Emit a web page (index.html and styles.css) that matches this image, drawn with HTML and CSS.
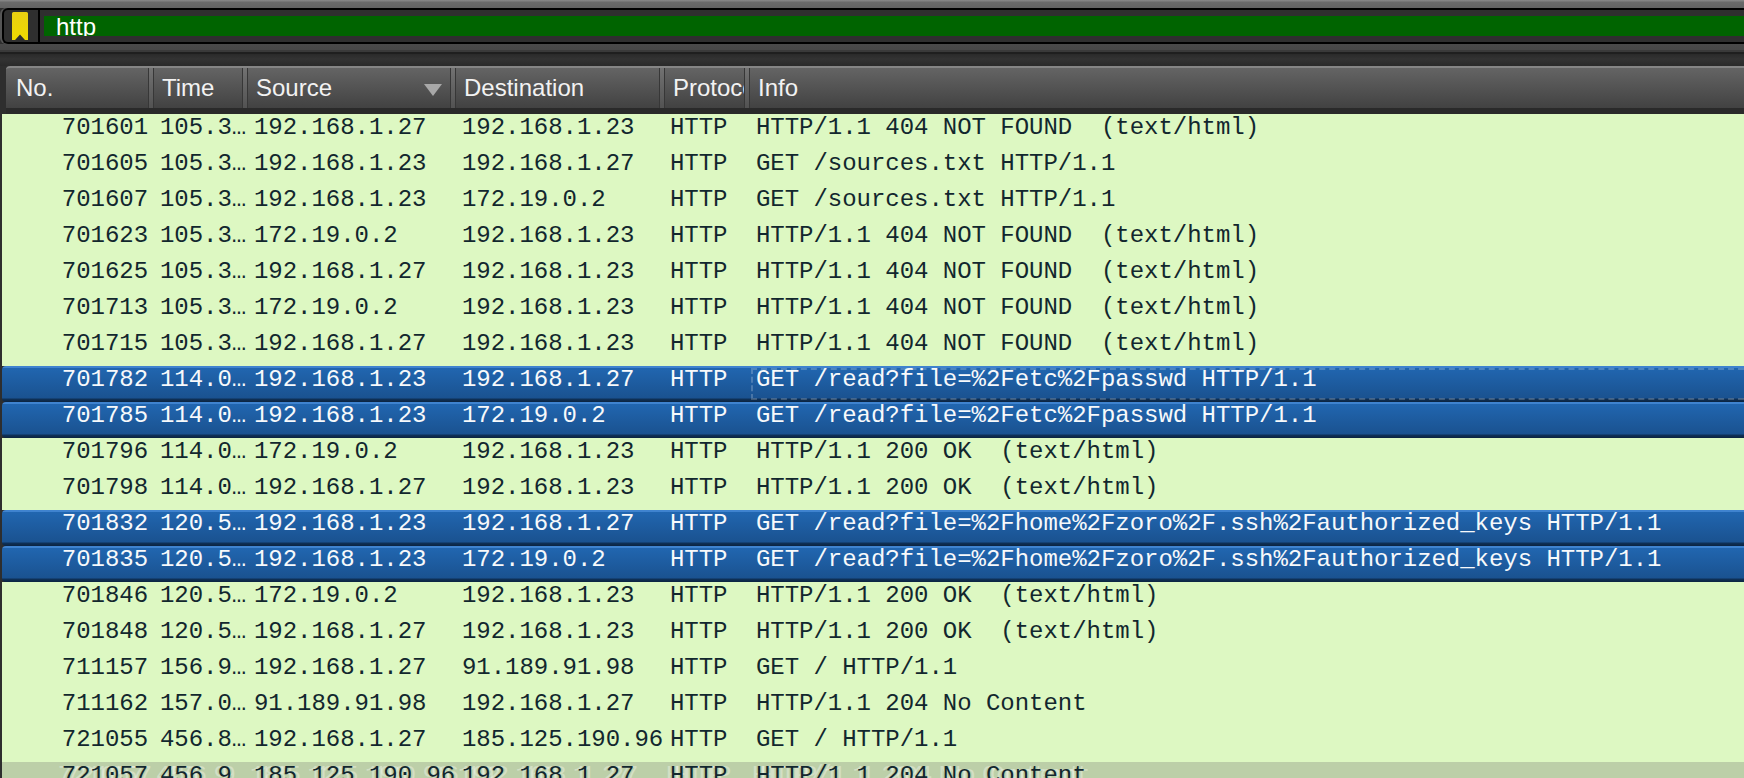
FILE: index.html
```html
<!DOCTYPE html>
<html lang="en">
<head>
<meta charset="utf-8">
<title>Packet list</title>
<link rel="stylesheet" href="styles.css">
</head>
<body>
<div class="chrome"></div>
<div class="filter">
  <div class="bookmark">
    <svg class="bookmark-icon" width="16" height="28" viewBox="0 0 16 28"><defs><linearGradient id="bm" x1="0" y1="0" x2="0" y2="1"><stop offset="0" stop-color="#e9cf12"/><stop offset="1" stop-color="#f0da00"/></linearGradient></defs><path d="M1.5 0H14.5A1.5 1.5 0 0 1 16 1.5V28H13L8 22.5L3 28H0V1.5A1.5 1.5 0 0 1 1.5 0Z" fill="url(#bm)"/></svg>
  </div>
  <div class="filter-field">http</div>
</div>
<div class="strip"></div>
<div class="head">
  <div class="th th-no"><span class="th-label">No.</span><span class="grip"></span></div>
  <div class="th"><span class="th-label">Time</span><span class="grip"></span></div>
  <div class="th"><span class="th-label">Source</span><svg class="sort" width="18" height="12" viewBox="0 0 18 12"><path d="M0 0H18L9 12Z" fill="#a8a8a8"/></svg><span class="grip"></span></div>
  <div class="th"><span class="th-label">Destination</span><span class="grip"></span></div>
  <div class="th"><span class="th-label">Protocol</span><span class="grip"></span></div>
  <div class="th th-info"><span class="th-label">Info</span></div>
</div>
<div class="list">
  <div class="row"><span class="no">701601</span><span>105.3…</span><span>192.168.1.27</span><span>192.168.1.23</span><span>HTTP</span><span>HTTP/1.1 404 NOT FOUND  (text/html)</span></div>
  <div class="row"><span class="no">701605</span><span>105.3…</span><span>192.168.1.23</span><span>192.168.1.27</span><span>HTTP</span><span>GET /sources.txt HTTP/1.1</span></div>
  <div class="row"><span class="no">701607</span><span>105.3…</span><span>192.168.1.23</span><span>172.19.0.2</span><span>HTTP</span><span>GET /sources.txt HTTP/1.1</span></div>
  <div class="row"><span class="no">701623</span><span>105.3…</span><span>172.19.0.2</span><span>192.168.1.23</span><span>HTTP</span><span>HTTP/1.1 404 NOT FOUND  (text/html)</span></div>
  <div class="row"><span class="no">701625</span><span>105.3…</span><span>192.168.1.27</span><span>192.168.1.23</span><span>HTTP</span><span>HTTP/1.1 404 NOT FOUND  (text/html)</span></div>
  <div class="row"><span class="no">701713</span><span>105.3…</span><span>172.19.0.2</span><span>192.168.1.23</span><span>HTTP</span><span>HTTP/1.1 404 NOT FOUND  (text/html)</span></div>
  <div class="row"><span class="no">701715</span><span>105.3…</span><span>192.168.1.27</span><span>192.168.1.23</span><span>HTTP</span><span>HTTP/1.1 404 NOT FOUND  (text/html)</span></div>
  <div class="row sel"><span class="no">701782</span><span>114.0…</span><span>192.168.1.23</span><span>192.168.1.27</span><span>HTTP</span><span class="focus">GET /read?file=%2Fetc%2Fpasswd HTTP/1.1</span></div>
  <div class="row sel"><span class="no">701785</span><span>114.0…</span><span>192.168.1.23</span><span>172.19.0.2</span><span>HTTP</span><span>GET /read?file=%2Fetc%2Fpasswd HTTP/1.1</span></div>
  <div class="row"><span class="no">701796</span><span>114.0…</span><span>172.19.0.2</span><span>192.168.1.23</span><span>HTTP</span><span>HTTP/1.1 200 OK  (text/html)</span></div>
  <div class="row"><span class="no">701798</span><span>114.0…</span><span>192.168.1.27</span><span>192.168.1.23</span><span>HTTP</span><span>HTTP/1.1 200 OK  (text/html)</span></div>
  <div class="row sel"><span class="no">701832</span><span>120.5…</span><span>192.168.1.23</span><span>192.168.1.27</span><span>HTTP</span><span>GET /read?file=%2Fhome%2Fzoro%2F.ssh%2Fauthorized_keys HTTP/1.1</span></div>
  <div class="row sel"><span class="no">701835</span><span>120.5…</span><span>192.168.1.23</span><span>172.19.0.2</span><span>HTTP</span><span>GET /read?file=%2Fhome%2Fzoro%2F.ssh%2Fauthorized_keys HTTP/1.1</span></div>
  <div class="row"><span class="no">701846</span><span>120.5…</span><span>172.19.0.2</span><span>192.168.1.23</span><span>HTTP</span><span>HTTP/1.1 200 OK  (text/html)</span></div>
  <div class="row"><span class="no">701848</span><span>120.5…</span><span>192.168.1.27</span><span>192.168.1.23</span><span>HTTP</span><span>HTTP/1.1 200 OK  (text/html)</span></div>
  <div class="row"><span class="no">711157</span><span>156.9…</span><span>192.168.1.27</span><span>91.189.91.98</span><span>HTTP</span><span>GET / HTTP/1.1</span></div>
  <div class="row"><span class="no">711162</span><span>157.0…</span><span>91.189.91.98</span><span>192.168.1.27</span><span>HTTP</span><span>HTTP/1.1 204 No Content</span></div>
  <div class="row"><span class="no">721055</span><span>456.8…</span><span>192.168.1.27</span><span>185.125.190.96</span><span>HTTP</span><span>GET / HTTP/1.1</span></div>
  <div class="row ghost"><span class="no">721057</span><span>456.9…</span><span>185.125.190.96</span><span>192.168.1.27</span><span>HTTP</span><span>HTTP/1.1 204 No Content</span></div>
</div>
</body>
</html>
```
FILE: styles.css
```css
html, body {
  margin: 0;
  height: 778px;
  overflow: hidden;
  background: #2e2e2e;
}
.chrome {
  height: 8px;
  background: linear-gradient(#8a8a8a, #6a6a6a 30%, #626262);
}
.filter {
  display: flex;
  height: 32px;
  margin-left: 2px;
  border: 2px solid #000;
  border-right: 0;
  border-radius: 6px 0 0 6px;
  background: #2f2f2f;
  box-shadow: -2px 0 0 #555;
}
.bookmark {
  flex: none;
  display: flex;
  align-items: flex-start;
  box-sizing: content-box;
  width: 26px;
  height: 30px;
  padding: 2px 0 0 8px;
  border-right: 2px solid #000;
}
.filter-field {
  flex: 1;
  height: 20px;
  margin: 6px 0 0 4px;
  padding-left: 12px;
  overflow: hidden;
  background: #006400;
  color: #fff;
  font: 24px/22px "Liberation Sans", Arial, sans-serif;
}
.strip {
  height: 22px;
  background: linear-gradient(#4a4a4a 0, #474747 6px, #3a3a3a 6px, #3a3a3a 8px, #1f1f1f 8px, #1f1f1f 10px, #2a2a2a 10px, #333 15px, #2a2a2a 22px);
}
.head {
  display: grid;
  grid-template-columns: 148px 94px 208px 209px 85px 1fr;
  height: 48px;
  margin-left: 6px;
  box-sizing: border-box;
  border-bottom: 6px solid;
  border-image: linear-gradient(#262626 33%, #111 33%, #111 66%, #2a2a2a 66%) 6;
  color: #f2f2f2;
  font: 24px/28px "Liberation Sans", Arial, sans-serif;
}
.th {
  display: flex;
  align-items: center;
  min-width: 0;
  padding-left: 8px;
  border-top: 2px solid #858585;
  background: linear-gradient(#646464, #424242);
}
.th-no {
  padding-left: 10px;
  border-top-left-radius: 4px;
}
.th-label {
  flex: 1;
  min-width: 0;
  overflow: hidden;
  white-space: nowrap;
}
.sort {
  flex: none;
  margin: 3px 8px 0 0;
}
.grip {
  flex: none;
  align-self: stretch;
  width: 4px;
  border-left: 1px solid #373737;
  border-right: 1px solid #373737;
  background: rgba(255, 255, 255, 0.09);
}
.list {
  margin-left: 2px;
  overflow: hidden;
}
.row {
  display: grid;
  grid-template-columns: 152px 94px 208px 208px 86px 1fr;
  height: 36px;
  background: #ddf8c2;
  color: #12272e;
  font: 24px/28px "Liberation Mono", "Courier New", monospace;
  letter-spacing: -0.03px;
  white-space: pre;
}
.row > span {
  padding-left: 6px;
}
.row > .no {
  padding: 0 6px 0 0;
  text-align: right;
}
.sel {
  box-sizing: border-box;
  padding-top: 2px;
  border-radius: 4px 0 0 4px;
  background: linear-gradient(#3f83cf 0, #3f83cf 2px, #2166b0 2px, #1a5290 32px, #0f3158 33px, #0b2440 36px);
  color: #f7f9fb;
  line-height: 24px;
}
.row > .focus {
  margin: 0 0 0 1px;
  padding-left: 3px;
  border: 2px dashed rgba(255, 255, 255, 0.2);
  border-right: 0;
  height: 28px;
  line-height: 20px;
}
.ghost {
  background: #bccfa8;
  text-shadow: -4px 0 rgba(255, 255, 255, 0.34), 4px 0 rgba(255, 255, 255, 0.34);
}
```
